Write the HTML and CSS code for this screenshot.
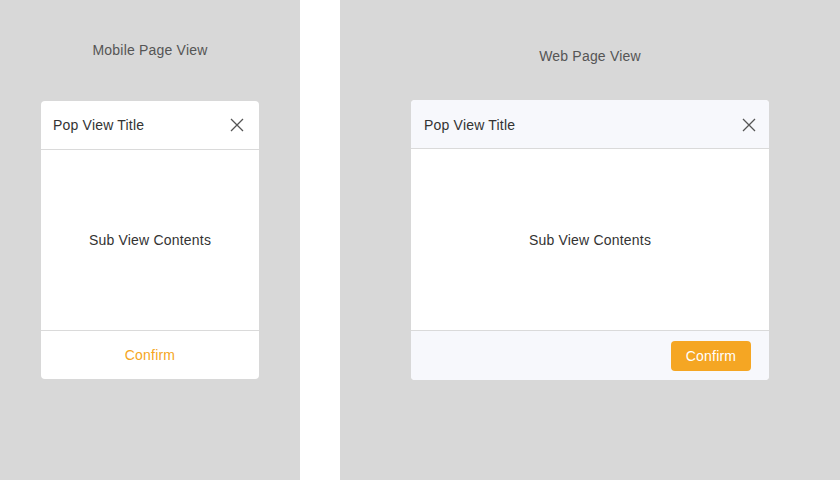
FILE: index.html
```html
<!DOCTYPE html>
<html>
<head>
<meta charset="utf-8">
<link rel="stylesheet" href="styles.css">
</head>
<body>
<div class="page">
  <section class="panel panel-mobile">
    <div class="panel-title">Mobile Page View</div>
    <div class="pop pop-mobile">
      <div class="pop-header">
        <span class="pop-title">Pop View Title</span>
        <svg class="close" width="14" height="14" viewBox="0 0 14 14"><path d="M1 1L13 13M13 1L1 13" stroke="#555" stroke-width="1.3" fill="none"/></svg>
      </div>
      <div class="pop-body">Sub View Contents</div>
      <div class="pop-footer footer-mobile">Confirm</div>
    </div>
  </section>
  <div class="divider"></div>
  <section class="panel panel-web">
    <div class="panel-title">Web Page View</div>
    <div class="pop pop-web">
      <div class="pop-header header-web">
        <span class="pop-title">Pop View Title</span>
        <svg class="close" width="14" height="14" viewBox="0 0 14 14"><path d="M1 1L13 13M13 1L1 13" stroke="#555" stroke-width="1.3" fill="none"/></svg>
      </div>
      <div class="pop-body body-web">Sub View Contents</div>
      <div class="pop-footer footer-web"><button class="btn">Confirm</button></div>
    </div>
  </section>
</div>
</body>
</html>
```
FILE: styles.css
```css
* { box-sizing: border-box; }
html, body { margin: 0; padding: 0; }
body {
  width: 840px;
  height: 480px;
  background: #fff;
  font-family: "Liberation Sans", Arial, sans-serif;
  font-size: 14px;
  letter-spacing: 0.2px;
  color: #333;
  overflow: hidden;
}
.page { display: flex; height: 480px; }
.panel {
  background: #d8d8d8;
  display: flex;
  flex-direction: column;
  align-items: center;
}
.panel-mobile { width: 300px; padding-top: 40px; }
.panel-web { flex: 1; padding-top: 46px; }
.divider { width: 40px; }
.panel-title {
  height: 20px;
  line-height: 20px;
  color: #555;
  font-size: 14px;
}
.panel-mobile .panel-title { margin-bottom: 41px; }
.panel-web .panel-title { margin-bottom: 34px; }
.pop {
  background: #fff;
  border-radius: 4px;
  overflow: hidden;
  display: flex;
  flex-direction: column;
}
.pop-mobile { width: 218px; }
.pop-web { width: 358px; }
.pop-header {
  height: 49px;
  border-bottom: 1px solid #dadada;
  display: flex;
  align-items: center;
  justify-content: space-between;
  padding: 0 15px 0 12px;
}
.header-web { background: #f7f8fc; padding: 1px 13px 0 13px; }
.pop-title { color: #333; font-size: 14px; }
.close { display: block; }
.pop-body {
  height: 181px;
  border-bottom: 1px solid #dadada;
  display: flex;
  align-items: center;
  justify-content: center;
  color: #333;
  font-size: 14px;
}
.body-web { height: 182px; }
.pop-footer { height: 48px; }
.footer-mobile {
  display: flex;
  align-items: center;
  justify-content: center;
  color: #f5a623;
  font-size: 14px;
}
.footer-web {
  background: #f7f8fc;
  height: 49px;
  display: flex;
  align-items: flex-start;
  justify-content: flex-end;
  padding: 10px 18px 0 0;
}
.btn {
  width: 80px;
  height: 30px;
  border: none;
  border-radius: 4px;
  background: #f5a623;
  color: #fff;
  font-family: "Liberation Sans", Arial, sans-serif;
  font-size: 14px;
  letter-spacing: 0.2px;
  padding: 0;
}
```
